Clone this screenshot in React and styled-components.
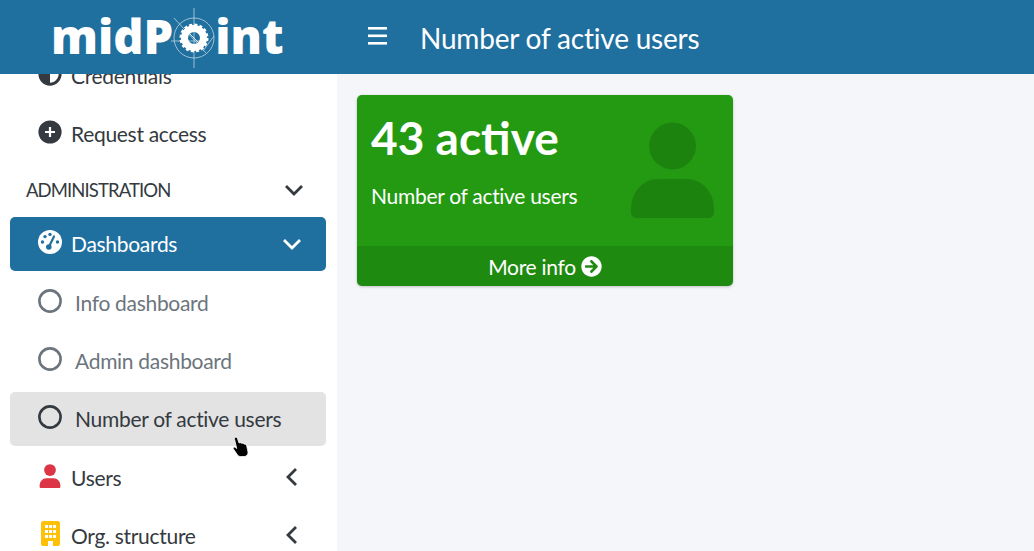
import React from "react";
import styled, { createGlobalStyle } from "styled-components";
import { FaAdjust, FaArrowCircleRight } from "react-icons/fa";

const GlobalStyle = createGlobalStyle`
  html, body {
    margin: 0;
    height: 100%;
    overflow: hidden;
    font-family: Lato, "Noto Sans", sans-serif;
    background: #f4f6f9;
  }
`;

const Page = styled.div`
  position: relative;
  display: flex;
  flex-direction: column;
  width: 1034px;
  height: 551px;
  overflow: hidden;
`;

const Header = styled.header`
  display: flex;
  align-items: center;
  flex: 0 0 74px;
  background: #20709f;
  color: #fff;
`;

const Logo = styled.div`
  display: flex;
  align-items: center;
  flex: 0 0 337px;
  box-sizing: border-box;
  padding: 0 0 3px 51px;
  font-family: "Open Sans", sans-serif;
  font-size: 47px;
  font-weight: 800;
`;

const Gear = styled.svg`
  flex: none;
  width: 60px;
  height: 60px;
  margin: 5px -9px 0 -9px;
`;

const MenuToggle = styled.svg`
  flex: none;
  width: 19px;
  height: 18px;
  margin: -2px 0 0 31px;
`;

const Title = styled.h1`
  margin: 2px 0 0 33px;
  font-size: 28px;
  font-weight: 400;
  letter-spacing: -0.2px;
`;

const Body = styled.div`
  display: flex;
  flex: 1;
  min-height: 0;
`;

const Sidebar = styled.aside`
  flex: 0 0 337px;
  overflow: hidden;
  background: #fff;
`;

/* the menu is scrolled, so the first row sits partly under the header */
const Menu = styled.nav`
  display: flex;
  flex-direction: column;
  gap: 4.3px;
  margin-top: -26px;
  padding: 0 11px 0 10px;
`;

const Row = styled.div`
  display: flex;
  align-items: center;
  flex: 0 0 54px;
  padding: 0 24px 0 28px;
  border-radius: 5px;
  font-size: 21px;
  letter-spacing: -0.3px;
  color: ${({ $active, $muted }) =>
    $active ? "#fff" : $muted ? "#6c757d" : "#343a40"};
  background: ${({ $active, $hover }) =>
    $active ? "#20709f" : $hover ? "#e3e3e3" : "transparent"};
`;

const SectionRow = styled(Row)`
  flex-basis: 48px;
  box-sizing: border-box;
  padding: 3px 22px 0 16px;
  font-size: 18.5px;
  letter-spacing: -0.9px;
`;

const RowIcon = styled.span`
  display: flex;
  justify-content: center;
  flex: 0 0 24px;
  margin: -3px ${({ $wide }) => ($wide ? "13px" : "9px")} 0 0;
  font-size: 24px;
  color: ${({ $color }) => $color || "inherit"};
`;

const RowLabel = styled.span`
  flex: 1;
  white-space: nowrap;
`;

const Chevron = styled.svg`
  flex: none;
  width: 20px;
  height: 20px;
`;

const Content = styled.main`
  flex: 1;
  padding: 21px 20px;
`;

const Card = styled.section`
  position: relative;
  width: 376px;
  height: 191px;
  display: flex;
  flex-direction: column;
  overflow: hidden;
  border-radius: 5px;
  background: #239a12;
  color: #fff;
  box-shadow: 0 0 1px rgba(0, 0, 0, 0.125), 0 1px 3px rgba(0, 0, 0, 0.2);
`;

const CardBody = styled.div`
  flex: 1;
  padding: 14px;
`;

const CardValue = styled.h3`
  margin: 0;
  font-size: 46px;
  font-weight: 700;
  line-height: 58px;
`;

const CardText = styled.p`
  margin: 15px 0 0;
  font-size: 21px;
  letter-spacing: -0.3px;
  line-height: 28px;
`;

const CardIcon = styled.svg`
  position: absolute;
  top: 27px;
  right: 19px;
  width: 83px;
  height: 96px;
  fill: rgba(0, 0, 0, 0.15);
`;

const CardFooter = styled.a`
  display: flex;
  align-items: center;
  justify-content: center;
  gap: 5px;
  flex: 0 0 40px;
  font-size: 21px;
  letter-spacing: -0.3px;
  background: rgba(0, 0, 0, 0.1);
`;

const Cursor = styled.svg`
  position: absolute;
  left: 232px;
  top: 436px;
  width: 18px;
  height: 22px;
`;

const GearMark = () => (
  <Gear viewBox="0 0 60 60" fill="none" stroke="#fff">
    <g strokeWidth="0.8" opacity="0.7">
      <circle cx="30" cy="30" r="20" />
      <path d="M30 0V60M7 33H42M10 10L42 45M50 28L39 43" />
    </g>
    <circle cx="30" cy="30" r="9.5" strokeWidth="7" />
    <circle cx="30" cy="30" r="13" strokeWidth="3" strokeDasharray="3 2.1" />
    <path d="M26 26L34 34" strokeWidth="0.8" />
  </Gear>
);

const Down = () => (
  <Chevron viewBox="0 0 20 20" fill="none" stroke="currentColor" strokeWidth="2.8">
    <path d="M2 6L10 14L18 6" />
  </Chevron>
);

const Left = () => (
  <Chevron viewBox="0 0 20 20" fill="none" stroke="currentColor" strokeWidth="2.8">
    <path d="M14 2L6 10L14 18" />
  </Chevron>
);

const Ring = () => (
  <svg width="24" height="24" viewBox="0 0 24 24" fill="none" stroke="currentColor" strokeWidth="2.6">
    <circle cx="12" cy="12" r="10.6" />
  </svg>
);

const PlusCircle = () => (
  <svg width="24" height="24" viewBox="0 0 24 24">
    <circle cx="12" cy="12" r="11.6" fill="currentColor" />
    <path d="M12 7V17M7 12H17" stroke="#fff" strokeWidth="2.2" />
  </svg>
);

const Gauge = () => (
  <svg width="24" height="24" viewBox="0 0 24 24">
    <circle cx="12" cy="12" r="12" fill="#fff" />
    <g fill="#20709f">
      <circle cx="4.5" cy="12" r="1.7" />
      <circle cx="7" cy="6.6" r="1.7" />
      <circle cx="12" cy="4.4" r="1.7" />
      <circle cx="19.5" cy="12" r="1.7" />
      <circle cx="10.8" cy="17" r="2.8" />
    </g>
    <path d="M10.8 17L16 6.5" stroke="#20709f" strokeWidth="2.2" strokeLinecap="round" />
  </svg>
);

const Person = () => (
  <svg width="22" height="24" viewBox="0 0 83 96" fill="currentColor">
    <circle cx="41.5" cy="24" r="23.5" />
    <path d="M27 57H56C71 57 83 70 83 87V91C83 94 80 96 77 96H6C3 96 0 94 0 91V87C0 70 12 57 27 57Z" />
  </svg>
);

const Building = () => (
  <svg width="19" height="25" viewBox="0 0 19 25">
    <path
      d="M2 0H17C18 0 19 1 19 2V23C19 24 18 25 17 25H12V20H7V25H2C1 25 0 24 0 23V2C0 1 1 0 2 0Z"
      fill="currentColor"
    />
    <g fill="#fff">
      <rect x="4" y="4" width="3" height="3" />
      <rect x="8" y="4" width="3" height="3" />
      <rect x="12" y="4" width="3" height="3" />
      <rect x="4" y="9" width="3" height="3" />
      <rect x="8" y="9" width="3" height="3" />
      <rect x="12" y="9" width="3" height="3" />
      <rect x="4" y="14" width="3" height="3" />
      <rect x="8" y="14" width="3" height="3" />
      <rect x="12" y="14" width="3" height="3" />
    </g>
  </svg>
);

const App = () => (
  <Page>
    <GlobalStyle />
    <Header>
      <Logo>
        midP
        <GearMark />
        int
      </Logo>
      <MenuToggle viewBox="0 0 19 18" fill="#fff">
        <rect y="0" width="19" height="2.6" />
        <rect y="7.5" width="19" height="2.6" />
        <rect y="15" width="19" height="2.6" />
      </MenuToggle>
      <Title>Number of active users</Title>
    </Header>
    <Body>
      <Sidebar>
        <Menu>
          <Row>
            <RowIcon><FaAdjust /></RowIcon>
            <RowLabel>Credentials</RowLabel>
          </Row>
          <Row>
            <RowIcon><PlusCircle /></RowIcon>
            <RowLabel>Request access</RowLabel>
          </Row>
          <SectionRow>
            <RowLabel>ADMINISTRATION</RowLabel>
            <Down />
          </SectionRow>
          <Row $active>
            <RowIcon><Gauge /></RowIcon>
            <RowLabel>Dashboards</RowLabel>
            <Down />
          </Row>
          <Row $muted>
            <RowIcon $wide><Ring /></RowIcon>
            <RowLabel>Info dashboard</RowLabel>
          </Row>
          <Row $muted>
            <RowIcon $wide><Ring /></RowIcon>
            <RowLabel>Admin dashboard</RowLabel>
          </Row>
          <Row $hover>
            <RowIcon $wide><Ring /></RowIcon>
            <RowLabel>Number of active users</RowLabel>
          </Row>
          <Row>
            <RowIcon $color="#dc3545"><Person /></RowIcon>
            <RowLabel>Users</RowLabel>
            <Left />
          </Row>
          <Row>
            <RowIcon $color="#ffc107"><Building /></RowIcon>
            <RowLabel>Org. structure</RowLabel>
            <Left />
          </Row>
        </Menu>
      </Sidebar>
      <Content>
        <Card>
          <CardBody>
            <CardValue>43 active</CardValue>
            <CardText>Number of active users</CardText>
          </CardBody>
          <CardIcon viewBox="0 0 83 96">
            <circle cx="41.5" cy="24" r="23.5" />
            <path d="M27 57H56C71 57 83 70 83 87V91C83 94 80 96 77 96H6C3 96 0 94 0 91V87C0 70 12 57 27 57Z" />
          </CardIcon>
          <CardFooter>
            More info <FaArrowCircleRight />
          </CardFooter>
        </Card>
      </Content>
    </Body>
    <Cursor viewBox="0 0 18 22">
      <path
        d="M3 1.5C4 .8 5 1.2 5.4 2.2L7 7C8 6.4 9.2 6.6 9.8 7.4 10.8 7 11.8 7.4 12.3 8.2 13.3 8 14.4 8.6 14.7 9.8L16 16C16.2 18 15 20 13 20.5H8.5C7 20.5 6 19.5 5 18.2L1.3 12.8C.8 11.8 1.8 10.6 3 11.3L4.7 12.5 2.6 3.4C2.4 2.6 2.5 1.9 3 1.5Z"
        fill="#000"
        stroke="#fff"
        strokeWidth="0.8"
      />
    </Cursor>
  </Page>
);

export default App;
